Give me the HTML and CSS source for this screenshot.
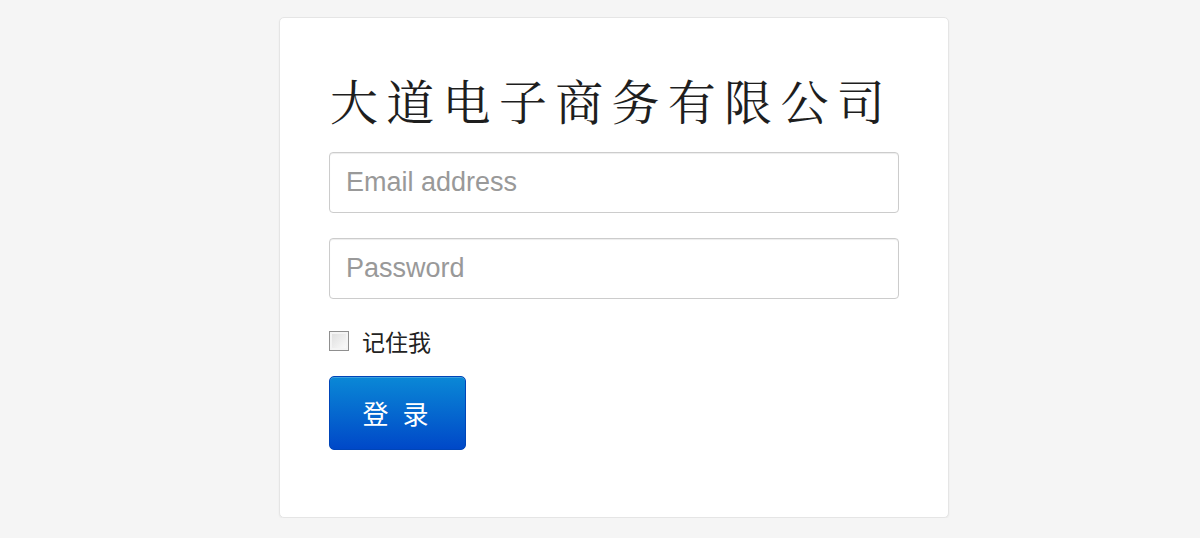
FILE: index.html
```html
<!DOCTYPE html>
<html lang="zh-CN">
<head>
  <meta charset="UTF-8">
  <meta name="viewport" content="width=device-width, initial-scale=1.0">
  <title>登录</title>
  <link rel="stylesheet" href="styles.css">
</head>
<body>
  <form class="signin">
    <h2 class="signin-heading">大道电子商务有限公司</h2>
    <input type="text" class="field" placeholder="Email address">
    <input type="password" class="field" placeholder="Password">
    <label class="remember"><input type="checkbox" value="remember-me"> 记住我</label>
    <button class="btn-primary" type="submit">登 录</button>
  </form>
</body>
</html>
```

FILE: styles.css
```css
body { margin: 0; padding-top: 17px; background-color: #f5f5f5; font-family: "Liberation Sans", Arial, "Noto Sans CJK SC", sans-serif; }
.signin { width: 570px; margin: 0 0 0 279px; padding: 52px 49px 67px; background-color: #fff; border: 1px solid #e5e5e5; border-radius: 5px; box-shadow: 0 1px 2px rgba(0,0,0,.05); }
.signin-heading { margin: 0 0 22px; padding-left: 1px; white-space: nowrap; font-family: "Noto Serif CJK SC", "Liberation Serif", "Noto Sans CJK SC", serif; font-weight: normal; font-size: 48px; line-height: 60px; letter-spacing: 8.3px; color: #1e1e1e; }
.field { display: block; box-sizing: border-box; width: 570px; height: 61px; margin: 0 0 25px; padding: 0 16px; font-family: inherit; font-size: 27px; color: #555; border: 1px solid #ccc; border-radius: 4px; box-shadow: inset 0 1px 1px rgba(0,0,0,.075); }
.field::placeholder { color: #999; }
.remember { display: flex; align-items: center; gap: 13px; margin: 2px 0 18px; font-family: "Noto Sans CJK SC", sans-serif; font-size: 23px; line-height: 34px; color: #222; }
.remember input { appearance: none; width: 20px; height: 20px; margin: 0; border: 1px solid #8f8f8f; background: linear-gradient(135deg, #dcdcdc, #fdfdfd); box-shadow: inset 0 0 0 2px #f4f4f4; }
.btn-primary { display: block; width: 137px; height: 74px; padding: 0 0 2px; font-family: "Noto Sans CJK SC", sans-serif; font-size: 26px; letter-spacing: 4px; color: #fff; border: 1px solid #0045b8; border-radius: 5px; background-image: linear-gradient(to bottom, #0a88d6, #0048c8); box-shadow: inset 0 1px 0 rgba(255,255,255,.2); cursor: pointer; }
```
